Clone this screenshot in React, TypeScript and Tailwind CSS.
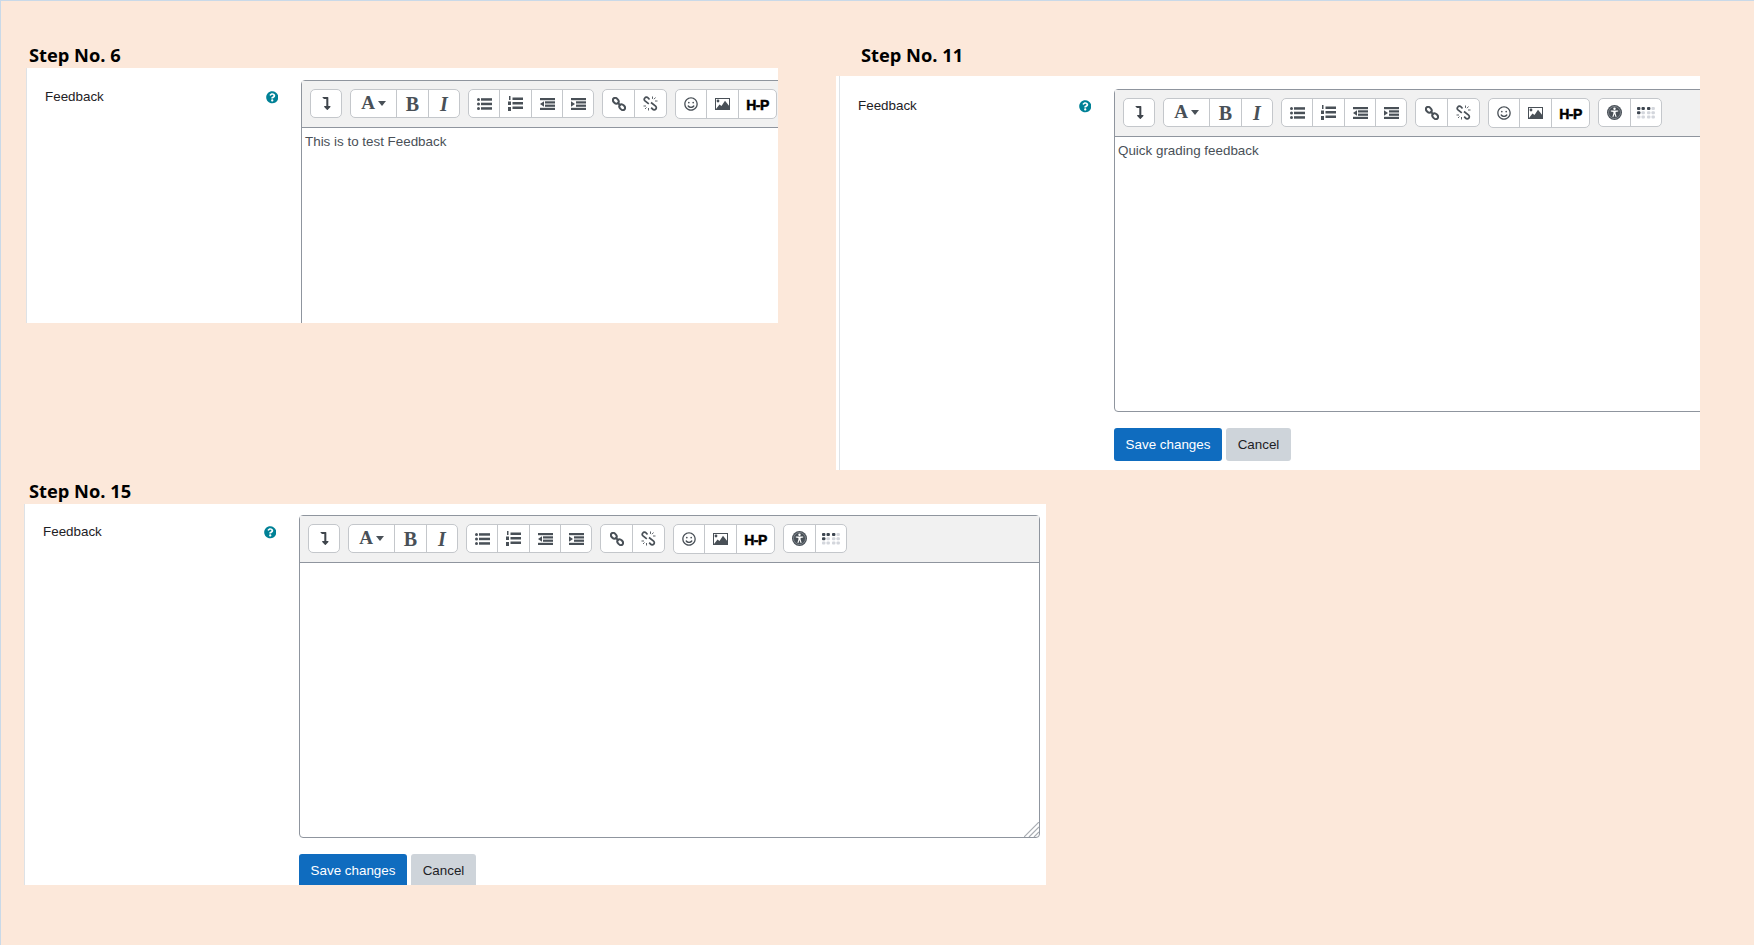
import { FaLevelDownAlt, FaQuestionCircle, FaRegSmile } from "react-icons/fa";

const ink = "#495057";

function BulletList() {
  return (
    <svg width="15" height="12" viewBox="0 0 15 12" fill={ink}>
      <circle cx="1.500" cy="1.500" r="1.500" />
      <circle cx="1.500" cy="6" r="1.500" />
      <circle cx="1.500" cy="10.500" r="1.500" />
      <rect x="4" y="0.200" width="11" height="2.500" />
      <rect x="4" y="4.700" width="11" height="2.500" />
      <rect x="4" y="9.200" width="11" height="2.500" />
    </svg>
  );
}

function NumberList() {
  return (
    <svg width="15" height="15" viewBox="0 0 15 15" fill={ink}>
      <rect x="1" y="0" width="1.500" height="4" />
      <rect x="0" y="5.500" width="3" height="3.500" />
      <rect x="0" y="11" width="3" height="4" />
      <rect x="4.500" y="1.500" width="10.500" height="2.500" />
      <rect x="4.500" y="6" width="10.500" height="2.500" />
      <rect x="4.500" y="10.500" width="10.500" height="2.500" />
    </svg>
  );
}

function Indent({ out }: { out?: boolean }) {
  return (
    <svg width="15" height="12" viewBox="0 0 15 12" fill={ink}>
      <rect x="0" y="0" width="15" height="2.200" />
      <rect x="0" y="9.800" width="15" height="2.200" />
      <rect x="5" y="3.300" width="10" height="2.200" />
      <rect x="5" y="6.600" width="10" height="2.200" />
      {out ? <path d="M4 3.200v5.600L0 6z" /> : <path d="M0 3.200v5.600L4 6z" />}
    </svg>
  );
}

function ChainLink() {
  return (
    <svg width="14" height="14" viewBox="0 0 14 14" fill="none" stroke={ink} strokeWidth="2">
      <ellipse cx="3.800" cy="3.800" rx="3.200" ry="2.400" transform="rotate(45 3.800 3.800)" />
      <ellipse cx="10.200" cy="10.200" rx="3.200" ry="2.400" transform="rotate(45 10.200 10.200)" />
      <path d="M5.500 5.500l3 3" />
    </svg>
  );
}

function BrokenLink() {
  return (
    <svg width="15" height="15" viewBox="0 0 15 15" fill="none" stroke={ink} strokeWidth="1.700">
      <path d="M6.500 3.500L5 1.800a2.100 2.100 0 0 0-3.200.2 2.100 2.100 0 0 0 .2 2.900l3.800 3" />
      <path d="M8 6.500l4.600 3.600a2.100 2.100 0 0 1 .2 3 2.100 2.100 0 0 1-3.200 0L8.200 11.600" />
      <path d="M9.500.500v2.400M12.500 1.500l-1.500 1.700M14.500 5H12M.5 10H3M2 13l1.500-1.500M5.500 14.500V12" strokeWidth="0.900" />
    </svg>
  );
}

function PictureIcon() {
  return (
    <svg width="15" height="12" viewBox="0 0 15 12">
      <rect x="0.500" y="0.500" width="14" height="11" fill="#fff" stroke={ink} />
      <circle cx="3" cy="3" r="1.400" fill={ink} />
      <path d="M1 11L4.500 6.500 6.500 8 10 2.800l4 5V11z" fill={ink} />
    </svg>
  );
}

function AccessIcon() {
  return (
    <svg width="15" height="15" viewBox="0 0 15 15">
      <circle cx="7.500" cy="7.500" r="7.500" fill="#495057" />
      <circle cx="7.500" cy="7.500" r="6" fill="none" stroke="#aeb4bb" strokeWidth="0.500" />
      <circle cx="7.500" cy="3.800" r="1.200" fill="#fff" />
      <path d="M3.800 5.400h7.400v1.100L8.600 7v1.400l1 3.300-1 .2-1.100-3-1.100 3-1-.2 1-3.300V7l-2.600-.5z" fill="#fff" />
    </svg>
  );
}

function BrailleGrid() {
  const cells = [0, 1, 2, 3, 4, 5];
  return (
    <svg width="18" height="12" viewBox="0 0 18 12">
      {[0, 10].map((ox) =>
        cells.map((c) => {
          const lit = ox === 0 ? c < 3 : c === 0;
          return (
            <rect
              key={`${ox}-${c}`}
              x={ox + (c % 2) * 4.500}
              y={Math.floor(c / 2) * 4.200}
              width="3.400"
              height="3"
              rx="1"
              fill={lit ? "#3d4650" : "#d3d6dc"}
            />
          );
        })
      )}
    </svg>
  );
}

function Cell({ w, children, last }: { w: string; children: React.ReactNode; last?: boolean }) {
  return (
    <div className={`${w} h-full flex items-center justify-center ${last ? "" : "border-r border-[#c4c7cb]"}`}>
      {children}
    </div>
  );
}

function Group({ children, tall }: { children: React.ReactNode; tall?: boolean }) {
  return (
    <div className={`${tall ? "h-[30px]" : "h-[29px]"} flex bg-white border border-[#c4c7cb] rounded-[5px] shrink-0`}>
      {children}
    </div>
  );
}

function Toolbar({ extras }: { extras?: boolean }) {
  return (
    <div className="h-[47px] shrink-0 bg-[#f1f1f1] border-b border-[#8f959e] pl-[8px] pt-[8px] flex gap-[8px] items-start">
      <Group>
        <Cell w="w-[30px]" last>
          <FaLevelDownAlt className="text-[13px] text-[#3f454c]" />
        </Cell>
      </Group>
      <Group>
        <Cell w="w-[46px]">
          <span className="font-['Liberation_Serif',serif] font-bold text-[19px] text-[#495057] mr-[3px]">A</span>
          <span className="w-0 h-0 border-x-[4.500px] border-x-transparent border-t-[5px] border-t-[#495057]" />
        </Cell>
        <Cell w="w-[32px]">
          <span className="font-['Liberation_Serif',serif] font-bold text-[20px] text-[#495057]">B</span>
        </Cell>
        <Cell w="w-[30px]" last>
          <span className="font-['Liberation_Serif',serif] italic font-bold text-[20px] text-[#495057]">I</span>
        </Cell>
      </Group>
      <Group>
        <Cell w="w-[31px]"><BulletList /></Cell>
        <Cell w="w-[32px]"><NumberList /></Cell>
        <Cell w="w-[31px]"><Indent out /></Cell>
        <Cell w="w-[30px]" last><Indent /></Cell>
      </Group>
      <Group>
        <Cell w="w-[32px]"><ChainLink /></Cell>
        <Cell w="w-[31px]" last><BrokenLink /></Cell>
      </Group>
      <Group tall>
        <Cell w="w-[31px]"><FaRegSmile className="text-[14px] text-[#495057] mb-[1px]" /></Cell>
        <Cell w="w-[32px]"><div className="mb-[1px]"><PictureIcon /></div></Cell>
        <Cell w="w-[37px]" last>
          <span className="font-['Liberation_Sans',sans-serif] text-[14px] leading-none font-bold text-black tracking-[-0.5px] mt-[2px] [-webkit-text-stroke:0.5px_black]">H-P</span>
        </Cell>
      </Group>
      {extras && (
        <Group>
          <Cell w="w-[32px]"><AccessIcon /></Cell>
          <Cell w="w-[30px]" last><BrailleGrid /></Cell>
        </Group>
      )}
    </div>
  );
}

type PanelProps = {
  box: string;
  editorBox: string;
  pad: string;
  labelPad: string;
  text?: string;
  extras?: boolean;
  actions?: boolean;
  resize?: boolean;
};

function FeedbackPanel({ box, editorBox, pad, labelPad, text, extras, actions, resize }: PanelProps) {
  return (
    <div className={`${box} bg-white overflow-hidden text-[13.4px] font-['Liberation_Sans',sans-serif]`}>
      <div className="h-full border-l border-[#dee2e6] flex">
        <div className={`w-[274px] shrink-0 pl-[18px] pr-[23px] ${labelPad} flex justify-between items-start`}>
          <span className="leading-[20px] text-[#1d2125]">Feedback</span>
          <FaQuestionCircle className="text-[12.500px] text-[#008196] mt-[4px]" />
        </div>
        <div className={`${pad} shrink-0`}>
          <div className={`${editorBox} relative flex flex-col bg-white border border-[#8f959e] rounded-[4px]`}>
            <Toolbar extras={extras} />
            <div className="pl-[3px] pt-[4px] leading-[20px] text-[#495057]">{text}</div>
            {resize && (
              <svg className="absolute right-0 bottom-0" width="15" height="15" viewBox="0 0 15 15" stroke="#a8acb2" strokeWidth="1.200">
                <path d="M0 15L15 0M5 15L15 5M10 15L15 10" />
              </svg>
            )}
          </div>
          {actions && (
            <div className="mt-[16px] flex gap-[4px]">
              <button className="w-[108px] h-[33px] pt-[2px] bg-[#0f6cbf] text-white rounded-[3px]">Save changes</button>
              <button className="w-[65px] h-[33px] pt-[2px] bg-[#ced4da] text-[#1d2125] rounded-[3px]">Cancel</button>
            </div>
          )}
        </div>
      </div>
    </div>
  );
}

function StepTitle({ children, className }: { children: React.ReactNode; className: string }) {
  return (
    <h2 className={`${className} h-[24px] leading-[24px] text-[18.3px] font-bold text-black font-['Open_Sans',sans-serif]`}>
      {children}
    </h2>
  );
}

export default function App() {
  return (
    <div className="w-[1754px] h-[945px] overflow-hidden bg-[#fce8da] border-l border-t border-[#c9d9e8] pt-[42px] flex flex-col">
      <div className="flex items-start">
        <div className="ml-[25px] w-[752px]">
          <StepTitle className="ml-[3px] mb-[1px]">Step No. 6</StepTitle>
          <FeedbackPanel
            box="h-[255px]"
            pad="pt-[12px]"
            labelPad="pt-[19px]"
            editorBox="w-[600px] h-[300px]"
            text="This is to test Feedback"
          />
        </div>
        <div className="ml-[58px] w-[864px]">
          <StepTitle className="ml-[25px] mb-[9px]">Step No. 11</StepTitle>
          <div className="bg-white pl-[3px]">
            <FeedbackPanel
              box="h-[394px]"
              pad="pt-[13px]"
              labelPad="pt-[20px]"
              editorBox="w-[700px] h-[323px]"
              text="Quick grading feedback"
              extras
              actions
            />
          </div>
        </div>
      </div>
      <div className="ml-[23px] mt-[9px] w-[1022px]">
        <StepTitle className="ml-[5px] mb-[1px]">Step No. 15</StepTitle>
        <FeedbackPanel
          box="h-[381px]"
          pad="pt-[11px]"
          labelPad="pt-[18px]"
          editorBox="w-[741px] h-[323px]"
          extras
          actions
          resize
        />
      </div>
    </div>
  );
}
